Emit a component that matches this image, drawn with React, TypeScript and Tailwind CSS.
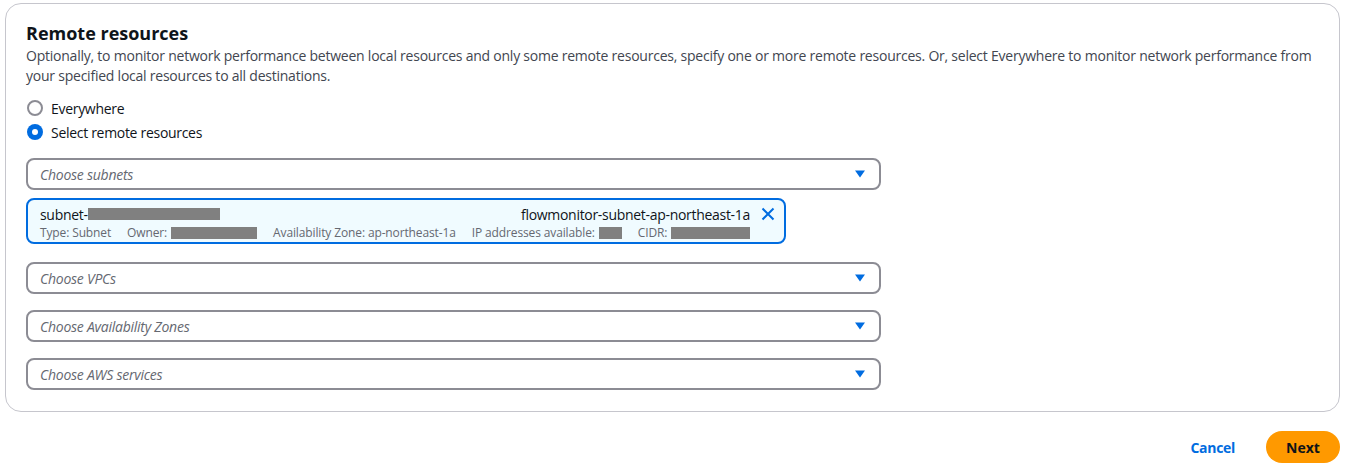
import React from "react";

const Arrow = () => (
  <svg width="10" height="8" viewBox="0 0 10 8" className="shrink-0">
    <path d="M0 0.5 H10 L5 7.5 Z" fill="#006ce0" />
  </svg>
);

const Select = ({ label }: { label: string }) => (
  <div className="flex h-[32px] w-[855px] items-center justify-between rounded-[8px] border-2 border-[#8c8c94] bg-white pl-[12px] pr-[14px]">
    <span className="text-[14px] italic tracking-[-0.25px] text-[#656871]">{label}</span>
    <Arrow />
  </div>
);

const Redact = ({ w }: { w: number }) => (
  <span className="inline-block h-[12px] bg-[#808080]" style={{ width: w }} />
);

export default function App() {
  return (
    <div
      className="h-[474px] w-[1350px] bg-white pl-[5px] pr-[10px] pt-[3px] text-[#0f141a]"
      style={{ fontFamily: '"Open Sans", "Noto Sans", sans-serif' }}
    >
      <div className="rounded-[16px] border border-[#c6c6cd] px-[20px] pb-[21px] pt-[17px]">
        <h2 className="text-[18px] font-bold leading-[24px]">Remote resources</h2>
        <p className="mt-[1px] text-[14px] leading-[20px] tracking-[-0.23px] text-[#424650]">
          Optionally, to monitor network performance between local resources and only some remote resources, specify one or more remote resources. Or, select Everywhere to monitor network performance from your specified local resources to all destinations.
        </p>
        <div className="mt-[10px] flex flex-col tracking-[-0.3px]">
          <label className="flex h-[24px] items-center gap-[8px] text-[14px]">
            <span className="ml-[1px] h-[16px] w-[16px] rounded-full border-2 border-[#8c8c94] bg-white" />
            <span>Everywhere</span>
          </label>
          <label className="flex h-[24px] items-center gap-[8px] text-[14px]">
            <span className="ml-[1px] flex h-[16px] w-[16px] items-center justify-center rounded-full bg-[#006ce0]">
              <span className="h-[6px] w-[6px] rounded-full bg-white" />
            </span>
            <span>Select remote resources</span>
          </label>
        </div>
        <div className="mt-[14px] flex flex-col">
          <Select label="Choose subnets" />
          <div className="mt-[8px] flex h-[46px] w-[760px] items-start rounded-[8px] border-2 border-[#006ce0] bg-[#f0fbff] pl-[12px] pr-[8px] pt-[4px]">
            <div className="flex min-w-0 flex-1 flex-col">
              <div className="flex h-[20px] items-center justify-between whitespace-nowrap text-[14px] tracking-[-0.3px]">
                <span className="flex items-center">
                  subnet-
                  <Redact w={132} />
                </span>
                <span>flowmonitor-subnet-ap-northeast-1a</span>
              </div>
              <div className="flex h-[17px] items-center gap-[16px] whitespace-nowrap text-[12px] tracking-[-0.13px] text-[#656871]">
                <span>Type: Subnet</span>
                <span className="flex items-center gap-[4px]">
                  Owner: <Redact w={86} />
                </span>
                <span>Availability Zone: ap-northeast-1a</span>
                <span className="flex items-center gap-[4px]">
                  IP addresses available: <Redact w={23} />
                </span>
                <span className="flex items-center gap-[4px]">
                  CIDR: <Redact w={79} />
                </span>
              </div>
            </div>
            <svg width="16" height="16" viewBox="0 0 16 16" className="ml-[10px] mt-[2px] shrink-0">
              <path d="M2.5 2.5 L13.5 13.5 M13.5 2.5 L2.5 13.5" stroke="#006ce0" strokeWidth="2" />
            </svg>
          </div>
          <div className="mt-[18px] flex flex-col gap-[16px]">
            <Select label="Choose VPCs" />
            <Select label="Choose Availability Zones" />
            <Select label="Choose AWS services" />
          </div>
        </div>
      </div>
      <div className="mt-[19px] flex items-center justify-end gap-[31px]">
        <span className="text-[14px] font-bold tracking-[-0.3px] text-[#006ce0]">Cancel</span>
        <span className="flex h-[32px] w-[74px] items-center justify-center rounded-full bg-[#ff9900] text-[14px] font-bold">
          Next
        </span>
      </div>
    </div>
  );
}
